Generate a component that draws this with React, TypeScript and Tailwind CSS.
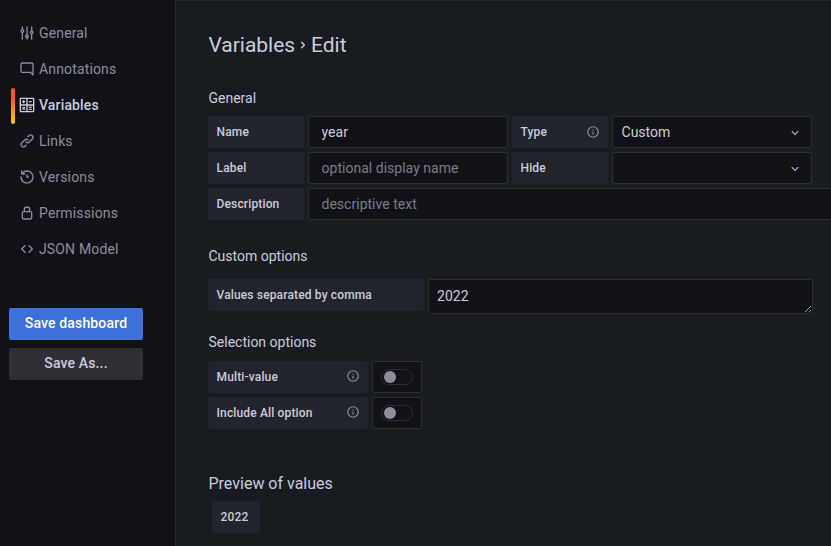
import type { ReactNode } from 'react';

const ICONS = {
  sliders:
    'M20,8.18V3a1,1,0,0,0-2,0V8.18a3,3,0,0,0,0,5.64V21a1,1,0,0,0,2,0V13.82a3,3,0,0,0,0-5.64ZM19,12a1,1,0,1,1,1-1A1,1,0,0,1,19,12Zm-6,2.18V3a1,1,0,0,0-2,0V14.18a3,3,0,0,0,0,5.64V21a1,1,0,0,0,2,0V19.82a3,3,0,0,0,0-5.64ZM12,18a1,1,0,1,1,1-1A1,1,0,0,1,12,18ZM6,6.18V3A1,1,0,0,0,4,3V6.18a3,3,0,0,0,0,5.64V21a1,1,0,0,0,2,0V11.82A3,3,0,0,0,6,6.18ZM5,10A1,1,0,1,1,6,9,1,1,0,0,1,5,10Z',
  comment:
    'M19,2H5A3,3,0,0,0,2,5V15a3,3,0,0,0,3,3H16.59l3.7,3.71A1,1,0,0,0,21,22a.84.84,0,0,0,.38-.08A1,1,0,0,0,22,21V5A3,3,0,0,0,19,2Zm1,16.59-2.29-2.3A1,1,0,0,0,17,16H5a1,1,0,0,1-1-1V5A1,1,0,0,1,5,4H19a1,1,0,0,1,1,1Z',
  calculator:
    'M3,1H21a2,2,0,0,1,2,2V21a2,2,0,0,1-2,2H3a2,2,0,0,1-2-2V3A2,2,0,0,1,3,1ZM3,3V11H11V3ZM13,3V11H21V3ZM3,13V21H11V13ZM13,13V21H21V13ZM6,4.8H8V6H9.2V8H8V9.2H6V8H4.8V6H6ZM14.8,6H19.2V8H14.8ZM14.8,14.4H19.2V16.2H14.8ZM14.8,17.8H19.2V19.6H14.8ZM5.7,14.5L7,15.8L8.3,14.5L9.5,15.7L8.2,17L9.5,18.3L8.3,19.5L7,18.2L5.7,19.5L4.5,18.3L5.8,17L4.5,15.7Z',
  link: 'M10,17.55,8.23,19.27a2.47,2.47,0,0,1-3.5-3.5l4.54-4.55a2.46,2.46,0,0,1,3.39-.09l.12.1a1,1,0,0,0,1.4-1.43A2.75,2.75,0,0,0,14,9.59a4.46,4.46,0,0,0-6.09.22L3.31,14.36a4.48,4.48,0,0,0,6.33,6.33L11.37,19A1,1,0,0,0,10,17.55ZM20.69,3.31a4.49,4.49,0,0,0-6.33,0L12.63,5A1,1,0,0,0,14,6.45l1.73-1.72a2.47,2.47,0,0,1,3.5,3.5l-4.54,4.55a2.46,2.46,0,0,1-3.39.09l-.12-.1a1,1,0,0,0-1.4,1.43,2.75,2.75,0,0,0,.23.21,4.47,4.47,0,0,0,6.09-.22l4.55-4.55A4.49,4.49,0,0,0,20.69,3.31Z',
  history:
    'M12,2A10,10,0,0,0,5.12,4.77V3a1,1,0,0,0-2,0V7.5a1,1,0,0,0,1,1H8.62a1,1,0,0,0,0-2H6.22A8,8,0,1,1,4,12a1,1,0,0,0-2,0A10,10,0,1,0,12,2Zm0,6a1,1,0,0,0-1,1v3a1,1,0,0,0,1,1h2a1,1,0,0,0,0-2H13V9A1,1,0,0,0,12,8Z',
  lock: 'M17,9V7A5,5,0,0,0,7,7V9a3,3,0,0,0-3,3v7a3,3,0,0,0,3,3H17a3,3,0,0,0,3-3V12A3,3,0,0,0,17,9ZM9,7a3,3,0,0,1,6,0V9H9Zm9,12a1,1,0,0,1-1,1H7a1,1,0,0,1-1-1V12a1,1,0,0,1,1-1H17a1,1,0,0,1,1,1Z',
  brackets:
    'M9.71,6.29a1,1,0,0,0-1.42,0l-5,5a1,1,0,0,0,0,1.42l5,5a1,1,0,0,0,1.42,0,1,1,0,0,0,0-1.42L5.41,12l4.3-4.29A1,1,0,0,0,9.71,6.29Zm11,5-5-5a1,1,0,0,0-1.42,1.42L18.59,12l-4.3,4.29a1,1,0,0,0,0,1.42,1,1,0,0,0,1.42,0l5-5A1,1,0,0,0,20.71,11.29Z',
  info: 'M12,2A10,10,0,1,0,22,12,10,10,0,0,0,12,2Zm0,18a8,8,0,1,1,8-8A8,8,0,0,1,12,20Zm0-8.5a1,1,0,0,0-1,1v3a1,1,0,0,0,2,0v-3A1,1,0,0,0,12,11.5Zm0-4a1.25,1.25,0,1,0,1.25,1.25A1.25,1.25,0,0,0,12,7.5Z',
  angleDown:
    'M17,9.17a1,1,0,0,0-1.41,0L12,12.71,8.46,9.17a1,1,0,0,0-1.41,0,1,1,0,0,0,0,1.42l4.24,4.24a1,1,0,0,0,1.42,0L17,10.59A1,1,0,0,0,17,9.17Z',
  angleRight:
    'M14.83,11.29,10.59,7.05a1,1,0,0,0-1.42,0,1,1,0,0,0,0,1.41L12.71,12,9.17,15.54a1,1,0,0,0,0,1.41,1,1,0,0,0,.71.29,1,1,0,0,0,.71-.29l4.24-4.24A1,1,0,0,0,14.83,11.29Z',
};

type IconName = keyof typeof ICONS;

function Icon({ name, className = 'size-4' }: { name: IconName; className?: string }) {
  return (
    <svg viewBox="0 0 24 24" fill="currentColor" fillRule="evenodd" className={`shrink-0 ${className}`}>
      <path d={ICONS[name]} />
    </svg>
  );
}

const NAV: { label: string; icon: IconName; active?: boolean }[] = [
  { label: 'General', icon: 'sliders' },
  { label: 'Annotations', icon: 'comment' },
  { label: 'Variables', icon: 'calculator', active: true },
  { label: 'Links', icon: 'link' },
  { label: 'Versions', icon: 'history' },
  { label: 'Permissions', icon: 'lock' },
  { label: 'JSON Model', icon: 'brackets' },
];

function FieldLabel({
  children,
  width,
  info,
  raised,
}: {
  children: ReactNode;
  width: string;
  info?: boolean;
  raised?: boolean;
}) {
  return (
    <div
      className={`flex h-8 shrink-0 items-center justify-between rounded-[3px] bg-[#22252b] pr-2 pl-[8.5px] text-xs font-medium tracking-[0.15px] ${width}`}
    >
      <span>{children}</span>
      {info && <Icon name="info" className={`size-3.5 text-[#8e8e99] ${raised ? 'mb-0.5' : ''}`} />}
    </div>
  );
}

const BOX = 'rounded-[2px] border border-[#2d2e34] bg-[#111217]';

function TextField({ value, placeholder, width }: { value?: string; placeholder?: string; width: string }) {
  return (
    <input
      className={`h-8 shrink-0 pr-3 pl-[12.5px] tracking-[0.02px] outline-none placeholder:text-[#7b7c86] ${BOX} ${width}`}
      defaultValue={value}
      placeholder={placeholder}
    />
  );
}

function SelectField({ value }: { value?: string }) {
  return (
    <div className={`flex h-8 w-[200px] items-center justify-between pr-2 pl-[8.5px] tracking-[0.02px] ${BOX}`}>
      <span>{value}</span>
      <Icon name="angleDown" className="mt-px size-4 text-[#9e9eaa]" />
    </div>
  );
}

function Toggle() {
  return (
    <div className={`flex h-8 w-[50px] items-center justify-center ${BOX}`}>
      <div className="flex h-4 w-8 items-center rounded-full border border-[#2d2e34] pl-0.5">
        <div className="size-3 rounded-full bg-[#8e8e99]" />
      </div>
    </div>
  );
}

function SectionTitle({ children, className }: { children: ReactNode; className: string }) {
  return <h5 className={`flex h-5 items-center pl-[0.5px] tracking-normal ${className}`}>{children}</h5>;
}

export default function App() {
  return (
    <div className="flex h-[546px] w-[831px] overflow-hidden bg-[#111217] font-[Roboto,sans-serif] text-sm tracking-[0.15px] text-[#ccccdc]">
      <aside className="flex w-[175px] shrink-0 flex-col pt-4">
        <nav className="flex flex-col pl-[11px]">
          {NAV.map((item) => (
            <a
              key={item.label}
              className={`flex h-9 items-center ${item.active ? 'font-medium' : 'text-[#8e8e99]'}`}
            >
              <span
                className={`mr-1 h-9 w-1 rounded-[2px] ${item.active ? 'bg-linear-to-b from-[#f05a28] from-30% to-[#fbca0a] to-99%' : ''}`}
              />
              <span className="flex items-center gap-1 pb-0.5">
                <Icon name={item.icon} />
                {item.label}
              </span>
            </a>
          ))}
        </nav>
        <div className="mt-10 ml-[9px] flex w-[134px] flex-col gap-2 font-medium">
          <button className="h-8 rounded-[2px] bg-[#3d71d9] pb-0.5 text-white">Save dashboard</button>
          <button className="h-8 rounded-[2px] bg-[#2f3036] pb-0.5">Save As...</button>
        </div>
      </aside>

      <main className="min-w-0 flex-1 border-t border-l border-[#24272c] bg-[#181b1f] pl-8">
        <h3 className="mt-[30px] flex h-7 items-center pl-[0.5px] text-[21px] tracking-[-0.03px]">
          Variables
          <Icon name="angleRight" />
          Edit
        </h3>

        <SectionTitle className="mt-[29px]">General</SectionTitle>
        <div className="mt-2 flex flex-col gap-1">
          <div className="flex gap-1">
            <FieldLabel width="w-24">Name</FieldLabel>
            <TextField value="year" width="w-[200px]" />
            <FieldLabel width="w-24" info>Type</FieldLabel>
            <SelectField value="Custom" />
          </div>
          <div className="flex gap-1">
            <FieldLabel width="w-24">Label</FieldLabel>
            <TextField placeholder="optional display name" width="w-[200px]" />
            <FieldLabel width="w-24">Hide</FieldLabel>
            <SelectField />
          </div>
          <div className="flex gap-1">
            <FieldLabel width="w-24">Description</FieldLabel>
            <TextField placeholder="descriptive text" width="w-[560px]" />
          </div>
        </div>

        <SectionTitle className="mt-[26px]">Custom options</SectionTitle>
        <div className="mt-[13px] flex gap-1">
          <FieldLabel width="w-[216px]">Values separated by comma</FieldLabel>
          <textarea
            className={`block h-[35px] w-[385px] px-2 py-1.5 leading-5 tracking-[0.02px] outline-none ${BOX}`}
            defaultValue="2022"
          />
        </div>

        <SectionTitle className="mt-[18px]">Selection options</SectionTitle>
        <div className="mt-[9px] flex flex-col gap-1">
          <div className="flex gap-1">
            <FieldLabel width="w-40" info raised>Multi-value</FieldLabel>
            <Toggle />
          </div>
          <div className="flex gap-1">
            <FieldLabel width="w-40" info raised>Include All option</FieldLabel>
            <Toggle />
          </div>
        </div>

        <SectionTitle className="mt-[45px] text-base">Preview of values</SectionTitle>
        <div className="mt-[7px] ml-1 flex">
          <FieldLabel width="w-12">2022</FieldLabel>
        </div>
      </main>
    </div>
  );
}
